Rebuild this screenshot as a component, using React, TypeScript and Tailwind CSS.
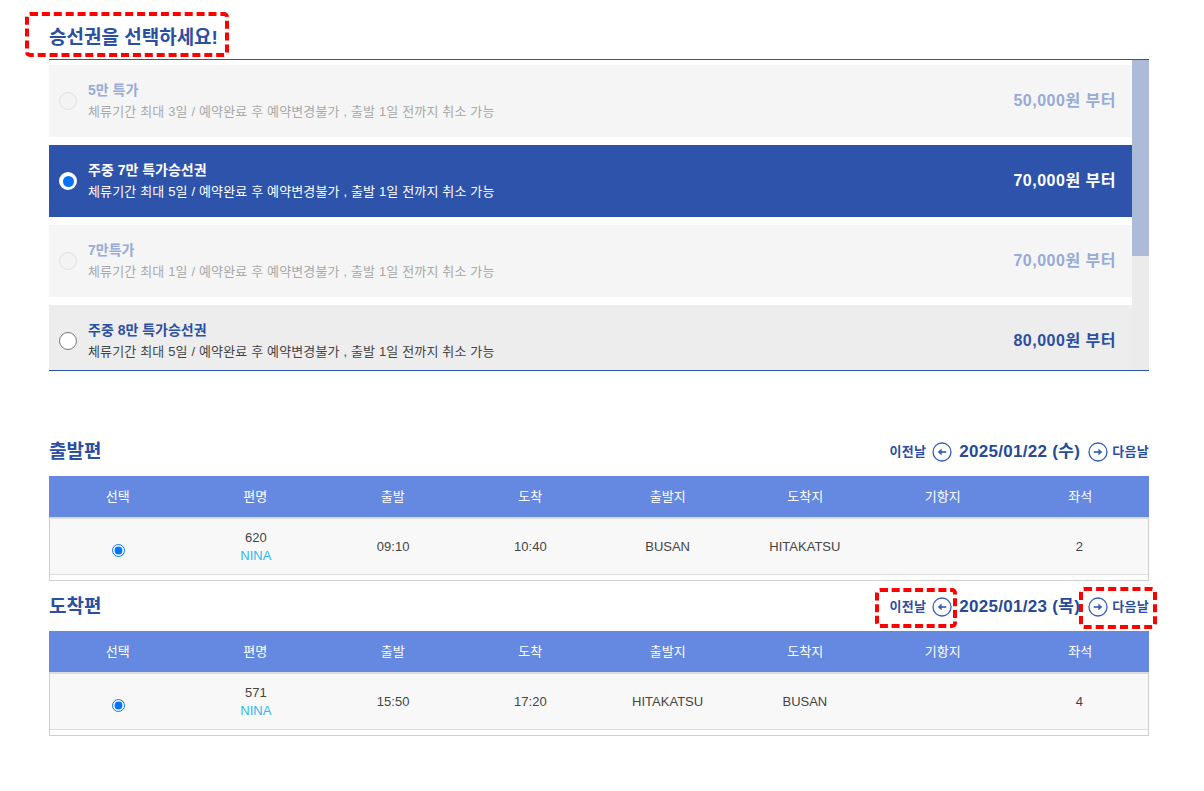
import React from 'react';

type TicketState = 'disabled' | 'selected' | 'normal';

interface Ticket {
  name: string;
  desc: string;
  price: string;
  state: TicketState;
}

interface Flight {
  no: string;
  carrier: string;
  dep: string;
  arr: string;
  from: string;
  to: string;
  via: string;
  seats: string;
}

const tickets: Ticket[] = [
  { name: '5만 특가', desc: '체류기간 최대 3일 / 예약완료 후 예약변경불가 , 출발 1일 전까지 취소 가능', price: '50,000원 부터', state: 'disabled' },
  { name: '주중 7만 특가승선권', desc: '체류기간 최대 5일 / 예약완료 후 예약변경불가 , 출발 1일 전까지 취소 가능', price: '70,000원 부터', state: 'selected' },
  { name: '7만특가', desc: '체류기간 최대 1일 / 예약완료 후 예약변경불가 , 출발 1일 전까지 취소 가능', price: '70,000원 부터', state: 'disabled' },
  { name: '주중 8만 특가승선권', desc: '체류기간 최대 5일 / 예약완료 후 예약변경불가 , 출발 1일 전까지 취소 가능', price: '80,000원 부터', state: 'normal' },
];

const columns = ['선택', '편명', '출발', '도착', '출발지', '도착지', '기항지', '좌석'];

function CircleArrow({ dir }: { dir: 'left' | 'right' }) {
  return (
    <svg width="20" height="20" viewBox="0 0 20 20" className={dir === 'right' ? 'rotate-180' : ''}>
      <circle cx="10" cy="10" r="9" fill="white" stroke="#3560b8" strokeWidth="1.3" />
      <path d="M14.2 10H8" stroke="#3560b8" strokeWidth="1.7" />
      <path d="M9.6 6.6 5.8 10l3.8 3.4z" fill="#3560b8" />
    </svg>
  );
}

function TicketRow({ ticket }: { ticket: Ticket }) {
  const selected = ticket.state === 'selected';
  const disabled = ticket.state === 'disabled';
  const bg = selected ? 'bg-[#2d53aa]' : disabled ? 'bg-[#f5f5f5]' : 'bg-[#ededed]';
  const titleColor = selected ? 'text-white' : disabled ? 'text-[#97aad8]' : 'text-[#2b4fa3]';
  const descColor = selected ? 'text-white' : disabled ? 'text-[#a9a9a9]' : 'text-[#444]';

  return (
    <div className={`flex h-[72px] shrink-0 items-center pl-[10px] pr-[16px] ${bg}`}>
      {selected ? (
        <span className="flex h-[18px] w-[18px] items-center justify-center rounded-full bg-white">
          <span className="h-[11px] w-[11px] rounded-full bg-[#0a72f5]" />
        </span>
      ) : (
        <span className={`h-[18px] w-[18px] rounded-full border ${disabled ? 'border-[#e2e2e2] bg-[#f3f3f3]' : 'border-[#777] bg-white'}`} />
      )}
      <div className="ml-[11px] flex-1">
        <p className={`text-[14px] font-bold leading-[21px] ${titleColor}`}>{ticket.name}</p>
        <p className={`text-[13px] leading-[21px] tracking-[0.15px] ${descColor}`}>{ticket.desc}</p>
      </div>
      <p className={`text-[16px] font-bold tracking-[0.5px] ${titleColor}`}>{ticket.price}</p>
    </div>
  );
}

function FlightSection({ title, date, flight, className }: { title: string; date: string; flight: Flight; className: string }) {
  return (
    <section className={className}>
      <div className="mb-2 flex h-[32px] items-center justify-between">
        <h2 className="text-[19px] font-bold text-[#2b4fa3]">{title}</h2>
        <div className="flex items-center text-[#2b4fa3]">
          <span className="text-[13px] font-bold tracking-[0.3px]">이전날</span>
          <span className="ml-[6px]"><CircleArrow dir="left" /></span>
          <span className="ml-[7px] text-[17px] font-bold tracking-[0.3px] text-[#264a94]">{date}</span>
          <span className="ml-[8px]"><CircleArrow dir="right" /></span>
          <span className="ml-[4px] text-[13px] font-bold tracking-[0.3px]">다음날</span>
        </div>
      </div>
      <div className="border-x border-b border-[#cfcfcf]">
        <div className="-mx-px grid h-[41px] grid-cols-8 items-center bg-[#6589e0] text-center text-[13px] text-white">
          {columns.map((col) => (
            <span key={col}>{col}</span>
          ))}
        </div>
        <div className="grid h-[58px] grid-cols-8 items-center border-t-2 border-b border-[#dcdcdc] bg-[#f8f8f8] text-center text-[13px] text-[#444]">
          <span className="flex justify-center pt-[8px]">
            <input type="radio" checked readOnly className="m-0 h-[13px] w-[13px]" />
          </span>
          <span className="leading-[18px]">
            {flight.no}
            <br />
            <span className="text-[#2fb8f2]">{flight.carrier}</span>
          </span>
          <span>{flight.dep}</span>
          <span>{flight.arr}</span>
          <span>{flight.from}</span>
          <span>{flight.to}</span>
          <span>{flight.via}</span>
          <span>{flight.seats}</span>
        </div>
        <div className="h-[5px]" />
      </div>
    </section>
  );
}

export default function App() {
  return (
    <div className="relative min-h-[791px] bg-white font-[Liberation_Sans,Noto_Sans_CJK_KR,sans-serif]">
      <div className="ml-[49px] w-[1100px]">
        <h1 className="pt-[24px] pb-[7px] text-[19px] font-bold leading-[28px] text-[#2b4fa3]">승선권을 선택하세요!</h1>

        <div className="flex h-[312px] border-y border-[#2d53aa]">
          <div className="flex flex-1 flex-col gap-2 overflow-hidden pt-[5px]">
            {tickets.map((ticket) => (
              <TicketRow key={ticket.name + ticket.desc} ticket={ticket} />
            ))}
          </div>
          <div className="w-[17px] bg-[#ebebeb]">
            <div className="h-[196px] bg-[#aebbd8]" />
          </div>
        </div>

        <FlightSection
          className="mt-[65px]"
          title="출발편"
          date="2025/01/22 (수)"
          flight={{ no: '620', carrier: 'NINA', dep: '09:10', arr: '10:40', from: 'BUSAN', to: 'HITAKATSU', via: '', seats: '2' }}
        />
        <FlightSection
          className="mt-[10px]"
          title="도착편"
          date="2025/01/23 (목)"
          flight={{ no: '571', carrier: 'NINA', dep: '15:50', arr: '17:20', from: 'HITAKATSU', to: 'BUSAN', via: '', seats: '4' }}
        />
      </div>

      {/* annotation boxes */}
      <div className="pointer-events-none absolute left-[25px] top-[12px] h-[45px] w-[204px] rounded-[5px] border-4 border-dashed border-[#ff0000]" />
      <div className="pointer-events-none absolute left-[875px] top-[588px] h-[40px] w-[82px] rounded-[5px] border-4 border-dashed border-[#ff0000]" />
      <div className="pointer-events-none absolute left-[1079px] top-[587px] h-[42px] w-[78px] rounded-[5px] border-4 border-dashed border-[#ff0000]" />
    </div>
  );
}
